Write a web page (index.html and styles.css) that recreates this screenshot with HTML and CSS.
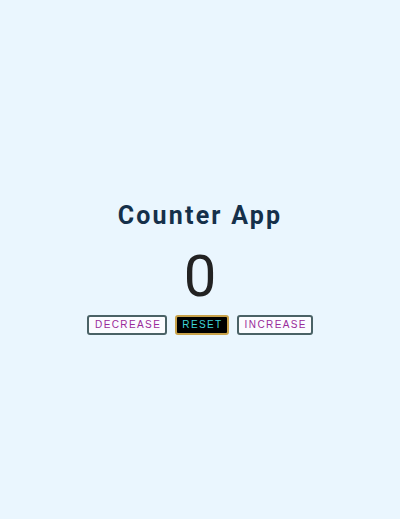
FILE: index.html
```html
<!DOCTYPE html>
<html>
<head>
<meta charset="utf-8">
<link rel="stylesheet" href="styles.css">
</head>
<body>
<main class="app">
  <h1 class="title">Counter App</h1>
  <div class="count">0</div>
  <div class="controls">
    <button class="btn btn-plain">DECREASE</button>
    <button class="btn btn-reset">RESET</button>
    <button class="btn btn-plain">INCREASE</button>
  </div>
</main>
</body>
</html>
```
FILE: styles.css
```css
html, body {
  margin: 0;
  padding: 0;
}
body {
  background: #eaf6fe;
  font-family: Roboto, "Noto Sans", sans-serif;
}
.app {
  height: 519px;
  display: flex;
  flex-direction: column;
  align-items: center;
  justify-content: center;
  padding-top: 16px;
  box-sizing: border-box;
}
.title {
  margin: 0;
  font-size: 25px;
  font-weight: 700;
  letter-spacing: 2.2px;
  color: #15304a;
  line-height: 30px;
}
.count {
  font-size: 58px;
  line-height: 64px;
  color: #222;
  margin-top: 13px;
}
.controls {
  display: flex;
  gap: 8px;
  margin-top: 7px;
}
.btn {
  font-family: "Liberation Sans", Arial, sans-serif;
  font-size: 10px;
  letter-spacing: 1.4px;
  padding: 2px 4px 2px 6px;
  height: 20px;
  border-radius: 3px;
  cursor: pointer;
}
.btn-plain {
  background: #fbfcff;
  border: 2px solid #4a6266;
  color: #9a2a9a;
}
.btn-reset {
  background: #000;
  border: 2px solid #c9a24a;
  color: #3fd5d8;
  padding: 2px 4px 2px 5px;
}
```
